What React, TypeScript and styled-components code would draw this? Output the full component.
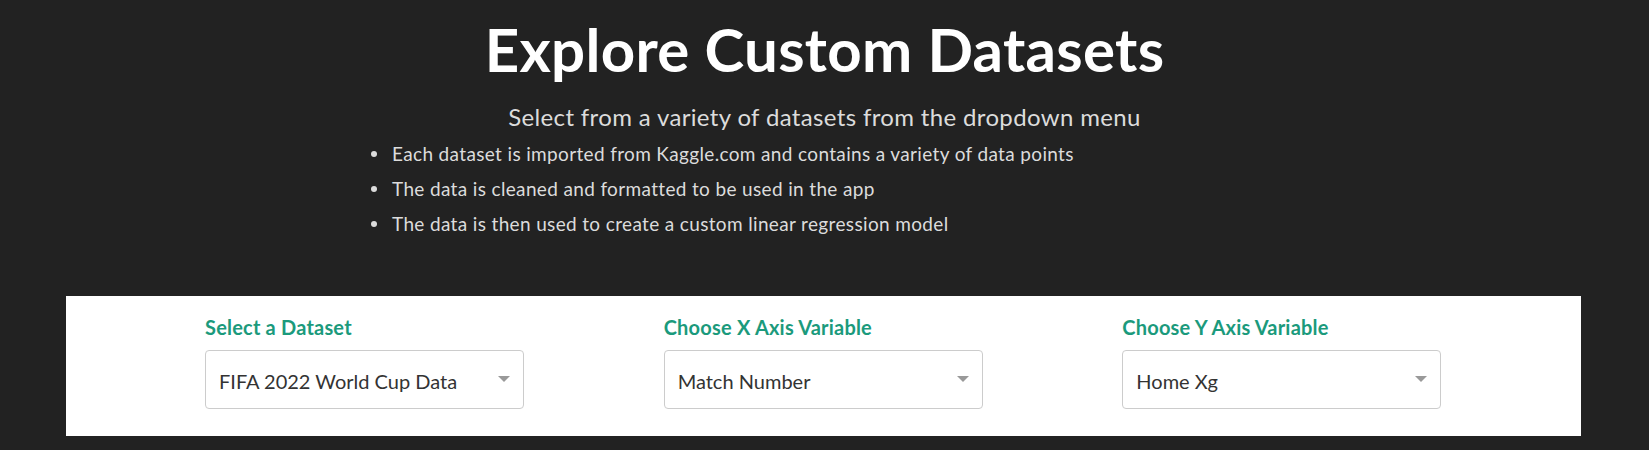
import React from "react";
import styled, { createGlobalStyle } from "styled-components";

const GlobalStyle = createGlobalStyle`
  html, body {
    margin: 0;
    padding: 0;
    background: #222222;
    font-family: Lato, "Noto Sans", "Liberation Sans", sans-serif;
  }
  * { box-sizing: border-box; }
`;

const Page = styled.div`
  width: 100%;
  min-height: 450px;
  background: #222222;
  display: flex;
  flex-direction: column;
  align-items: stretch;
  overflow: hidden;
`;

const Header = styled.header`
  display: flex;
  flex-direction: column;
  align-items: center;
  padding-top: 13px;
`;

const Title = styled.h1`
  margin: 0;
  font-size: 60px;
  line-height: 1.2;
  font-weight: 700;
  letter-spacing: 0.3px;
  color: #ffffff;
`;

const Subtitle = styled.p`
  margin: 18px 0 0;
  font-size: 24px;
  line-height: 1.2;
  font-weight: 400;
  letter-spacing: 0.35px;
  color: #dcdcdc;
`;

const BulletList = styled.ul`
  margin: 4px 0 0;
  padding: 0 0 0 392px;
  list-style: none;
`;

const Bullet = styled.li`
  position: relative;
  font-size: 19px;
  line-height: 35px;
  letter-spacing: 0.35px;
  color: #dcdcdc;

  &::before {
    content: "";
    position: absolute;
    left: -21px;
    top: 15px;
    width: 6px;
    height: 6px;
    border-radius: 50%;
    background: #dcdcdc;
  }
`;

const Panel = styled.section`
  margin: 55px 68px 14px 66px;
  height: 140px;
  background: #ffffff;
  display: grid;
  grid-template-columns: repeat(3, 1fr);
  padding: 19px 0 0 139px;
`;

const Field = styled.div`
  display: flex;
  flex-direction: column;
  align-items: flex-start;
`;

const Label = styled.label`
  font-size: 20px;
  line-height: 24px;
  font-weight: 700;
  letter-spacing: 0.2px;
  color: #1b9a7c;
  margin-bottom: 11px;
`;

const SelectBox = styled.div`
  width: 319px;
  height: 59px;
  border: 1px solid #cccccc;
  border-radius: 4px;
  background: #ffffff;
  display: flex;
  align-items: center;
  justify-content: space-between;
  padding: 3px 13px 0 13px;
`;

const SelectValue = styled.span`
  font-size: 20px;
  color: #333333;
`;

const Caret = styled.svg`
  width: 12px;
  height: 6px;
  flex: none;
  margin-top: -3px;
`;

const fields = [
  { label: "Select a Dataset", value: "FIFA 2022 World Cup Data" },
  { label: "Choose X Axis Variable", value: "Match Number" },
  { label: "Choose Y Axis Variable", value: "Home Xg" },
];

export default function App() {
  return (
    <>
      <GlobalStyle />
      <Page>
        <Header>
          <Title>Explore Custom Datasets</Title>
          <Subtitle>Select from a variety of datasets from the dropdown menu</Subtitle>
        </Header>
        <BulletList>
          <Bullet>Each dataset is imported from Kaggle.com and contains a variety of data points</Bullet>
          <Bullet>The data is cleaned and formatted to be used in the app</Bullet>
          <Bullet>The data is then used to create a custom linear regression model</Bullet>
        </BulletList>
        <Panel>
          {fields.map((f) => (
            <Field key={f.label}>
              <Label>{f.label}</Label>
              <SelectBox>
                <SelectValue>{f.value}</SelectValue>
                <Caret viewBox="0 0 12 6">
                  <path d="M0 0 L12 0 L6 6 Z" fill="#999999" />
                </Caret>
              </SelectBox>
            </Field>
          ))}
        </Panel>
      </Page>
    </>
  );
}
